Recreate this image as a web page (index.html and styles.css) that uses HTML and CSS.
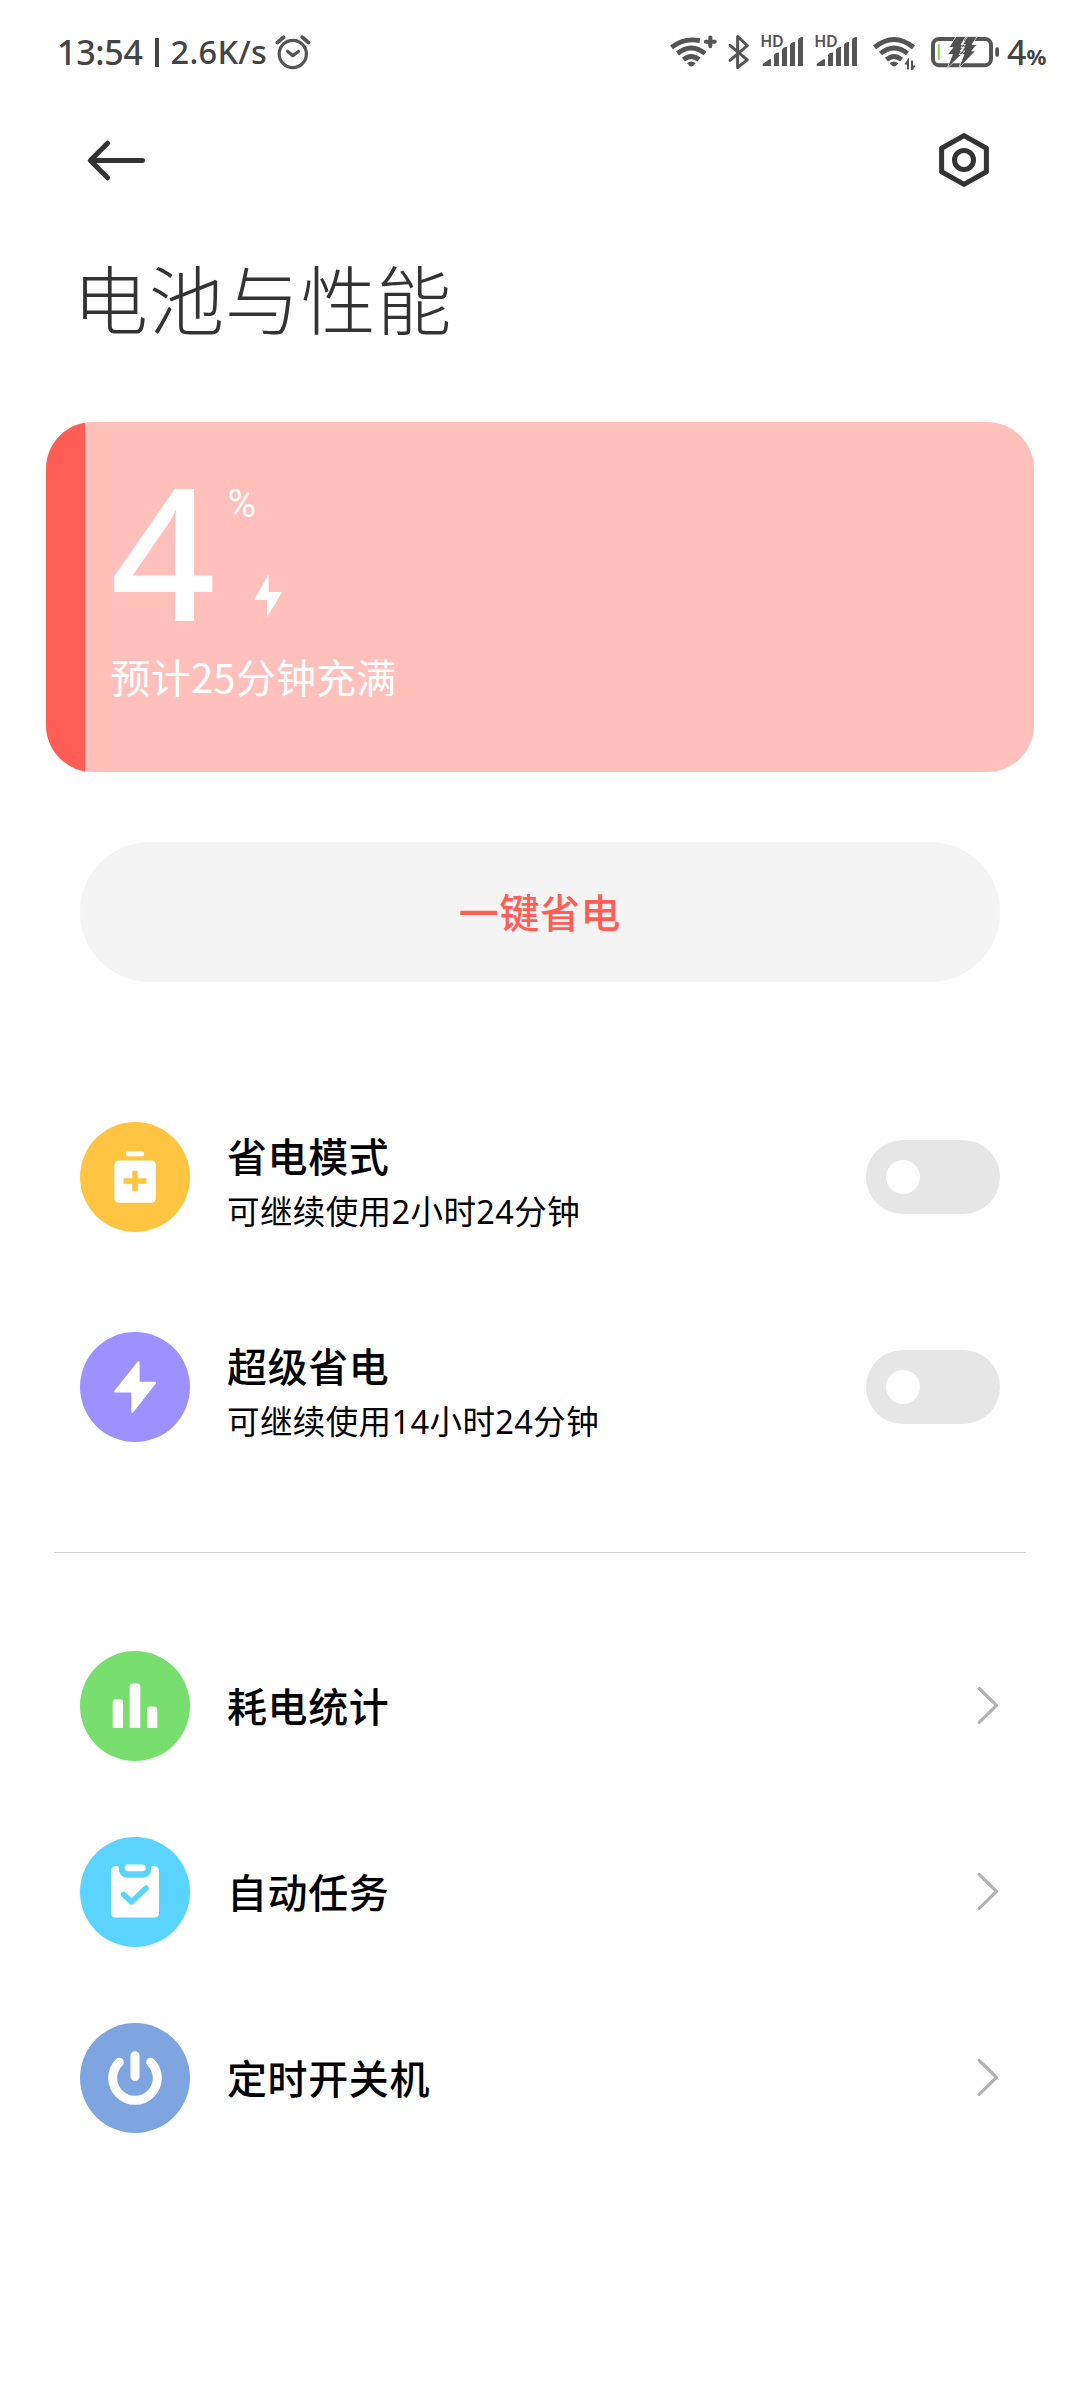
FILE: index.html
```html
<!DOCTYPE html>
<html lang="zh-CN">
<head>
<meta charset="utf-8">
<title>电池与性能</title>
<link rel="stylesheet" href="styles.css">
</head>
<body>
<div class="screen">
  <div class="status">
    <div class="status-left">
      <span class="time">13:54</span>
      <span class="sep"></span>
      <span class="speed">2.6K/s</span>
      <svg class="alarm" viewBox="275 34 36 36" width="36" height="36" fill="none" stroke="#555" stroke-width="3.2" stroke-linecap="round" stroke-linejoin="round"><circle cx="292.8" cy="54" r="13.6"/><path d="M287.5 51.2l5.3 4.6 5.6-4.4"/><path stroke-width="3.8" d="M277.3 42.6l6.2-5.3M302.3 37.3l6.2 5.3"/></svg>
    </div>
    <div class="status-right">
      <svg viewBox="668 32 52 38" width="52" height="38" fill="none" stroke="#555" stroke-width="4.8"><path d="M671.5 47.4Q684 37.3 699.8 40.6M677.5 53.5Q691.3 42.5 705 53.5M683.5 59.6Q691.3 53.3 699 59.6"/><path d="M687 63.2q4.3-3.4 8.6 0l-2.3 2.6q-2 1.4-4 0z" fill="#555" stroke="none"/><path stroke-width="4" stroke-linecap="round" d="M710.3 37.4v8.8M705.8 41.8h9"/></svg>
      <svg viewBox="726 32 26 38" width="26" height="38" fill="none" stroke="#555" stroke-width="3" stroke-linejoin="round" stroke-linecap="round"><path d="M730 45.3L747.3 59.8 737.6 67.5V36.5L747.3 45.6 730 60.3"/></svg>
      <svg class="signal" viewBox="760 22 46 48" width="46" height="48" fill="#555"><text class="hd" x="760.3" y="47">HD</text><path d="M762.7 66v-2l6.3-4.6q2-1 2 .8V66zM774 66V56q0-3.5 5-3.5V66zM782 66V50.500q0-3.500 5-3.500v19zM790 66V45.500q0-3.500 5-3.500v24zM798 66V40.500q0-3.500 5-3.500v29z"/></svg>
      <svg class="signal" viewBox="760 22 46 48" width="46" height="48" fill="#555"><text class="hd" x="760.3" y="47">HD</text><path d="M762.7 66v-2l6.3-4.6q2-1 2 .8V66zM774 66V56q0-3.5 5-3.5V66zM782 66V50.500q0-3.500 5-3.500v19zM790 66V45.500q0-3.500 5-3.500v24zM798 66V40.500q0-3.500 5-3.500v29z"/></svg>
      <svg class="wifi" viewBox="870 32 50 38" width="50" height="38" fill="none" stroke="#555" stroke-width="4.8"><path d="M874.500 47.400Q894 31.500 913.500 47.400M880.500 53.500Q894 42.500 907.500 53.500M886.500 59.600Q894 53.300 901.500 59.600"/><path d="M889.700 63.200q4.300-3.400 8.600 0l-2.300 2.600q-2 1.400-4 0z" fill="#555" stroke="none"/><path stroke-width="2" d="M908 69.500V60.500l-2.600 4M912 60.500v9l2.600-4"/></svg>
      <svg class="battery" viewBox="928 32 74 38" width="74" height="38"><rect x="933" y="39" width="58" height="26.200" rx="6" fill="none" stroke="#555" stroke-width="4"/><path d="M938.800 45v14" stroke="#83d34b" stroke-width="2" stroke-linecap="round"/><rect x="995.200" y="47.200" width="3.800" height="9.500" rx="1.800" fill="#555"/><path d="M956 36.500h10l-5 8h4.500L960 51h5l-18 17.500 5.500-14h-5l5.500-7h-4zM967.500 36.500h9.500l-5 8h5L971.500 51h4L958.500 68.500l5.500-14h-5l5.500-7H961z" fill="#505050" stroke="#fff" stroke-width=".7"/></svg>
      <span class="pct">4<small>%</small></span>
    </div>
  </div>

  <header class="bar">
    <svg class="back" viewBox="86 138 62 46" width="62" height="46" fill="none" stroke="#333" stroke-width="5" stroke-linecap="round" stroke-linejoin="round"><path d="M107.600 143.200L90.300 160.500l17.300 17.300M91 160.500h51.500"/></svg>
    <svg viewBox="936 130 56 60" width="56" height="60" fill="none" stroke="#333" stroke-width="5" stroke-linejoin="round"><path d="M964 135.600L986.400 148.200V171.800L964 184.400 941.600 171.800V148.200z"/><circle cx="964" cy="160" r="9.500"/></svg>
  </header>

  <h1 class="title">电池与性能</h1>

  <section class="card">
    <div class="card-level"></div>
    <div class="card-body">
      <div class="reading">
        <span class="num">4</span>
        <div class="marks">
          <span class="unit">%</span>
          <svg class="charge" viewBox="254 574 28 44" width="28" height="44" fill="#fff"><path d="M268.700 574v17.900H282L267 617.300V600H254z"/></svg>
        </div>
      </div>
      <p class="estimate">预计25分钟充满</p>
    </div>
  </section>

  <button class="save">一键省电</button>

  <section class="modes">
    <div class="row">
      <svg class="icon" viewBox="0 0 110 110"><circle cx="55" cy="55" r="55" fill="#ffc542"/><rect x="34.300" y="38.500" width="41.500" height="42.300" rx="4.500" fill="#fff"/><rect x="46" y="29.300" width="18.200" height="4.900" rx="2.200" fill="#fff"/><path d="M55 48.800v20.400M43.500 59h23" stroke="#ffc542" stroke-width="5.500"/></svg>
      <div class="text"><span class="label">省电模式</span><span class="sub">可继续使用2小时24分钟</span></div>
      <span class="toggle"></span>
    </div>
    <div class="row">
      <svg class="icon" viewBox="0 0 110 110"><circle cx="55" cy="55" r="55" fill="#9d91ff"/><path d="M58.600 30V50.800H75L52.300 80V59.600H35z" fill="#fff" stroke="#fff" stroke-width="2" stroke-linejoin="round"/></svg>
      <div class="text"><span class="label">超级省电</span><span class="sub">可继续使用14小时24分钟</span></div>
      <span class="toggle"></span>
    </div>
  </section>

  <section class="links">
    <div class="row">
      <svg class="icon" viewBox="0 0 110 110"><circle cx="55" cy="55" r="55" fill="#78df6f"/><path d="M32.700 77V51.500q0-3.300 3.300-3.300h3.700q3.300 0 3.300 3.300V77zM49.700 77V35.700q0-3.300 3.300-3.300h4q3.300 0 3.300 3.300V77zM67 77V58.700q0-3.300 3.300-3.300H74q3.300 0 3.300 3.300V77z" fill="#fff"/></svg>
      <span class="label">耗电统计</span>
      <svg class="chevron" viewBox="976 1684 24 42" width="24" height="42"><path d="M979.200 1688.500L996.500 1705.300 979.200 1722.300"/></svg>
    </div>
    <div class="row">
      <svg class="icon" viewBox="0 0 110 110"><circle cx="55" cy="55" r="55" fill="#5ad4ff"/><path d="M36 29.200h2.700V31q0 9.800 9.300 9.800h14q9.300 0 9.300-9.800v-1.800H74q5 0 5 5V76q0 4.500-4.500 4.500h-39Q31 80.500 31 76V34.200q0-5 5-5z" fill="#fff"/><rect x="44.700" y="27.400" width="21" height="6.800" rx="3.400" fill="#fff"/><path d="M43.500 57.500l8.200 7.300L66 51.300" fill="none" stroke="#5ad4ff" stroke-width="5.600" stroke-linecap="round" stroke-linejoin="round"/></svg>
      <span class="label">自动任务</span>
      <svg class="chevron" viewBox="976 1684 24 42" width="24" height="42"><path d="M979.200 1688.500L996.500 1705.300 979.200 1722.300"/></svg>
    </div>
    <div class="row">
      <svg class="icon" viewBox="0 0 110 110"><circle cx="55" cy="55" r="55" fill="#7ea5df"/><path d="M39.300 39.200A22.300 22.300 0 1 0 70.700 39.200M55 32.700v20.800" fill="none" stroke="#fff" stroke-width="9" stroke-linecap="round"/></svg>
      <span class="label">定时开关机</span>
      <svg class="chevron" viewBox="976 1684 24 42" width="24" height="42"><path d="M979.200 1688.500L996.500 1705.300 979.200 1722.300"/></svg>
    </div>
  </section>
</div>
</body>
</html>
```

FILE: styles.css
```css
* { box-sizing: border-box; }

body {
  margin: 0;
  background: #fefefe;
  color: #000;
  font-family: "Noto Sans CJK SC", sans-serif;
}

svg { display: block; flex: none; }

.screen { width: 1080px; height: 2400px; overflow: hidden; }

/* Status bar */
.status {
  display: flex;
  justify-content: space-between;
  height: 104px;
  padding: 32px 30px 0 57px;
  color: #444;
  font-family: "Noto Sans", sans-serif;
  font-weight: 500;
}
.status-left, .status-right { display: flex; height: 40px; line-height: 40px; }
.time { width: 98px; font-size: 34px; letter-spacing: -.3px; }
.sep { width: 3.500px; height: 29px; margin: 6px 12px 0 0; background: #444; }
.speed { width: 104.500px; font-size: 32.500px; letter-spacing: .3px; }
.alarm { margin-top: 2px; }
.status-right svg + svg { margin-left: 6px; }
.status-right svg + .signal { margin: -10px 0 0 8px; }
.status-right svg + .wifi { margin-left: 10px; }
.status-right svg + .battery { margin-left: 8px; }
.hd { font: 600 16px "Noto Sans", sans-serif; letter-spacing: -.5px; }
.pct { width: 43px; margin-left: 5px; font-size: 34px; white-space: nowrap; }
.pct small { font-size: 22px; font-weight: 700; }

/* App bar */
.bar {
  display: flex;
  justify-content: space-between;
  align-items: center;
  height: 112px;
  padding: 0 88px 0 86px;
}
.back { margin-top: 1px; }

.title {
  height: 206px;
  margin: 0;
  padding: 26px 0 0 73px;
  color: #333;
  font-size: 75px;
  font-weight: 300;
  line-height: 110px;
  letter-spacing: .9px;
}

/* Battery card */
.card {
  display: flex;
  width: 988px;
  height: 350px;
  margin: 0 46px;
  overflow: hidden;
  border-radius: 47px;
  background: #ffbfba;
  color: #fff;
}
.card-level { width: 38.500px; background: #ff5e57; }
.card-body { padding: 50px 0 0 26px; }
.reading { display: flex; height: 165px; }
.num { width: 117px; font: 550 184px/155px "Noto Sans", sans-serif; }
.marks { display: flex; flex-direction: column; }
.unit { height: 102px; font: 400 39px/64px Roboto, sans-serif; }
.charge { margin-left: 26px; }
.estimate { margin: 9px 0 0; font-size: 40px; line-height: 60px; letter-spacing: .2px; }

.save {
  display: block;
  width: 920px;
  height: 140px;
  margin: 70px 80px 0;
  padding: 0 0 2px;
  border: 0;
  border-radius: 70px;
  background: #f4f4f4;
  color: #ff5e57;
  font: 500 40px/60px "Noto Sans CJK SC", sans-serif;
  letter-spacing: .6px;
}

/* Rows */
.row { display: flex; align-items: center; height: 110px; padding: 0 80px; }
.icon { width: 110px; height: 110px; margin-right: 37px; }
.label { font-size: 40px; font-weight: 500; line-height: 60px; letter-spacing: .6px; }
.text { display: flex; flex-direction: column; padding-top: 9px; }
.sub { font-family: "Noto Sans", "Noto Sans CJK SC", sans-serif; font-size: 32.500px; line-height: 54px; letter-spacing: .4px; }

.modes { display: grid; gap: 100px; margin-top: 140px; }

.toggle {
  width: 134px;
  height: 74px;
  margin-left: auto;
  padding: 20px;
  border-radius: 37px;
  background: #e6e6e6;
}
.toggle::before {
  display: block;
  width: 34px;
  height: 34px;
  border-radius: 50%;
  background: #fff;
  content: "";
}

.links {
  display: grid;
  gap: 76px;
  margin-top: 110px;
  padding-top: 99px;
  background: linear-gradient(#d0d0d0, #d0d0d0) 54px 0 / 972px 1px no-repeat;
}
.links .label { margin-top: -2px; }
.chevron { margin: -3px 0 0 auto; fill: none; stroke: #b2b2b2; stroke-width: 3.200; stroke-linecap: round; stroke-linejoin: round; }
```
